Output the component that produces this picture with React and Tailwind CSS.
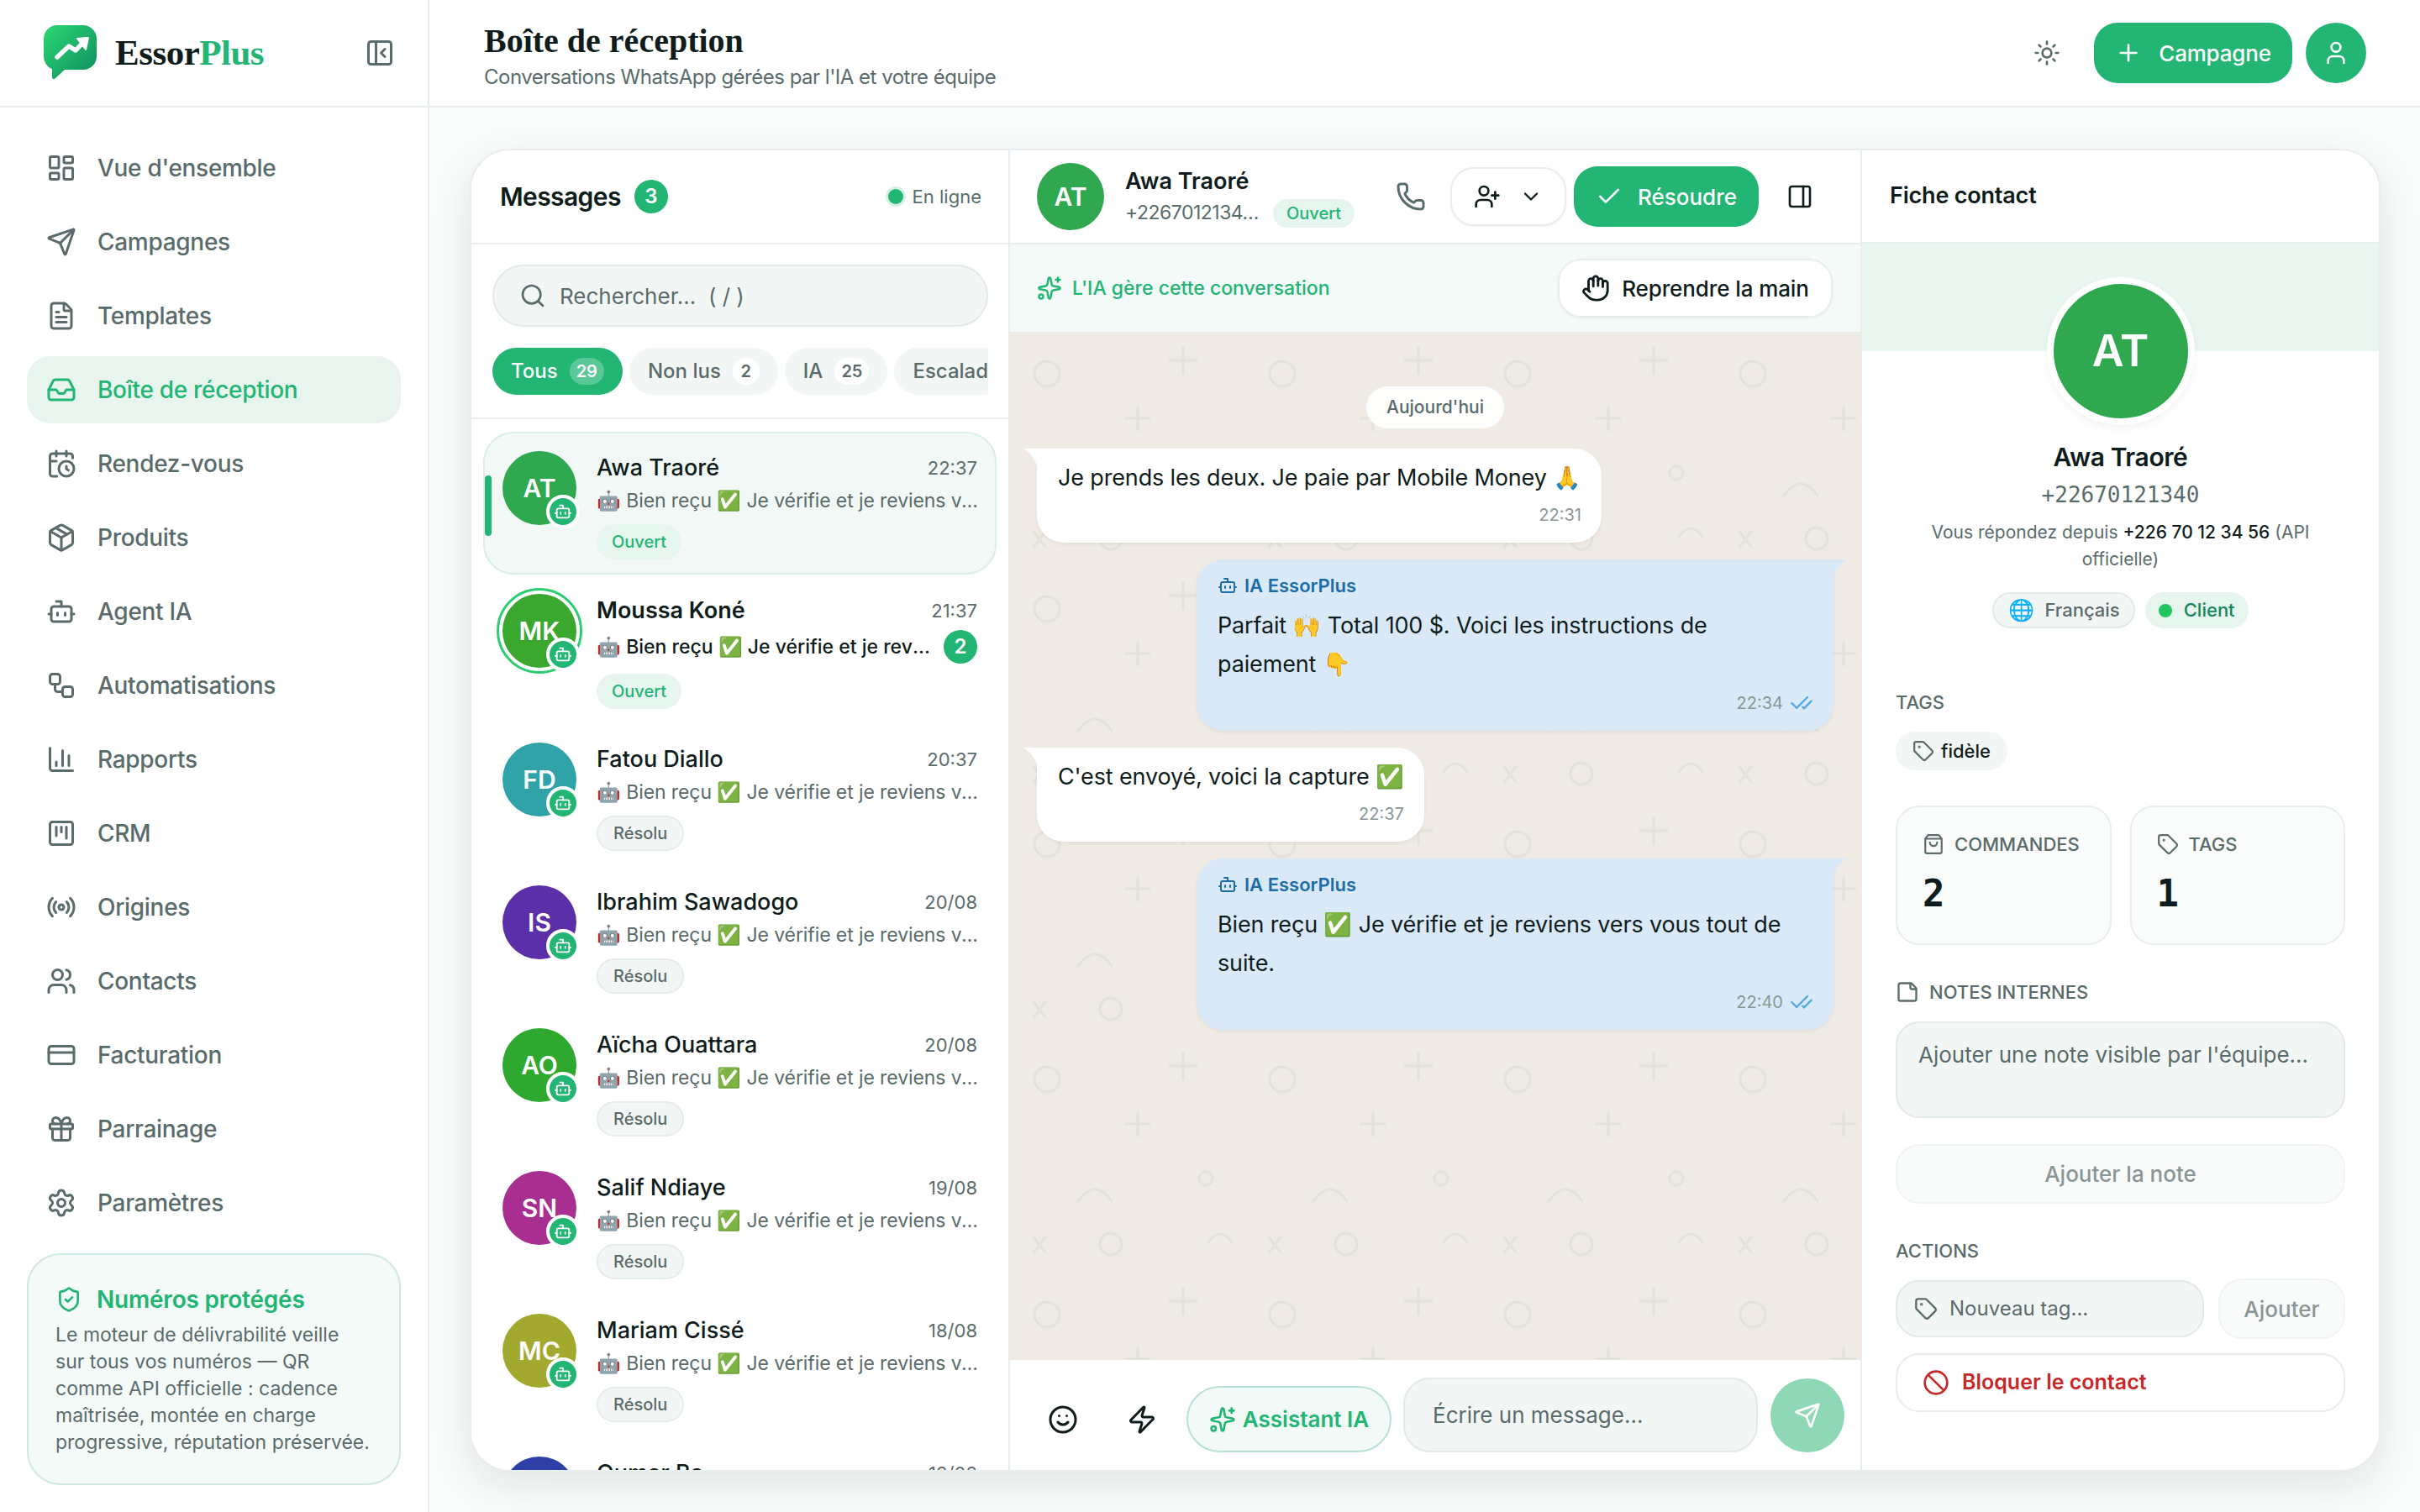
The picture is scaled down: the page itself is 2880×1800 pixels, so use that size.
import React from "react";
import {
  LayoutDashboard, Send, FileText, Inbox, CalendarClock, Package, Bot, Workflow, ChartColumn,
  SquareKanban, Radio, Users, CreditCard, Gift, Settings, ShieldCheck, PanelLeftClose, Sun, Plus,
  User, Search, Phone, UserPlus, ChevronDown, Check, PanelRight, Sparkles, Hand, CheckCheck,
  Smile, Zap, Tag, ShoppingBag, StickyNote, Ban,
} from "lucide-react";

const NAV = [
  { label: "Vue d'ensemble", icon: LayoutDashboard },
  { label: "Campagnes", icon: Send },
  { label: "Templates", icon: FileText },
  { label: "Boîte de réception", icon: Inbox, active: true },
  { label: "Rendez-vous", icon: CalendarClock },
  { label: "Produits", icon: Package },
  { label: "Agent IA", icon: Bot },
  { label: "Automatisations", icon: Workflow },
  { label: "Rapports", icon: ChartColumn },
  { label: "CRM", icon: SquareKanban },
  { label: "Origines", icon: Radio },
  { label: "Contacts", icon: Users },
  { label: "Facturation", icon: CreditCard },
  { label: "Parrainage", icon: Gift },
  { label: "Paramètres", icon: Settings },
];

const PREVIEW = "🤖 Bien reçu ✅ Je vérifie et je reviens vers vous tout de suite.";

const CONVERSATIONS = [
  { initials: "AT", name: "Awa Traoré", time: "22:37", color: "bg-[#2fa84f]", status: "Ouvert", selected: true },
  { initials: "MK", name: "Moussa Koné", time: "21:37", color: "bg-[#3aa72f]", status: "Ouvert", unread: 2 },
  { initials: "FD", name: "Fatou Diallo", time: "20:37", color: "bg-[#2fa3a8]", status: "Résolu" },
  { initials: "IS", name: "Ibrahim Sawadogo", time: "20/08", color: "bg-[#5b2fa8]", status: "Résolu" },
  { initials: "AO", name: "Aïcha Ouattara", time: "20/08", color: "bg-[#2fa82f]", status: "Résolu" },
  { initials: "SN", name: "Salif Ndiaye", time: "19/08", color: "bg-[#a82f8f]", status: "Résolu" },
  { initials: "MC", name: "Mariam Cissé", time: "18/08", color: "bg-[#a3a82f]", status: "Résolu" },
  { initials: "OB", name: "Oumar Ba", time: "18/08", color: "bg-[#2f3fa8]", status: "Résolu" },
];

function Logo() {
  return (
    <svg width="64" height="68" viewBox="0 0 64 68" className="shrink-0">
      <defs>
        <linearGradient id="logoGrad" x1="0" y1="0" x2="1" y2="1">
          <stop offset="0" stopColor="#2bd873" />
          <stop offset="1" stopColor="#0f8a5f" />
        </linearGradient>
      </defs>
      <path
        d="M16 1h31a16 16 0 0 1 16 16v21a16 16 0 0 1-16 16H25L13.5 64.5c-1.5 1.3-3.5.5-3.5-1.5V53.2A16 16 0 0 1 0 38V17A16 16 0 0 1 16 1z"
        fill="url(#logoGrad)"
      />
      <path d="M16 39 30 26l8 5 12-13" fill="none" stroke="#fff" strokeWidth="5.5" strokeLinecap="round" strokeLinejoin="round" />
      <path d="M53 16 40 17l10 13z" fill="#fff" stroke="#fff" strokeWidth="2" strokeLinejoin="round" />
    </svg>
  );
}

function Sidebar() {
  return (
    <aside className="w-[511px] shrink-0 h-full bg-white border-r-2 border-[#e8eeed] flex flex-col">
      <div className="h-[128px] shrink-0 border-b-2 border-[#e8eeed] flex items-center pl-[52px] pr-[39px]">
        <Logo />
        <span className="ml-[21px] text-[43px] font-bold tracking-[-0.5px] text-[#0f1c1c] font-['Liberation_Serif',serif]">
          Essor<span className="text-[#22b573]">Plus</span>
        </span>
        <PanelLeftClose size={36} className="ml-auto text-[#5a6b6b]" />
      </div>
      <nav className="px-[32px] pt-[32px] flex flex-col gap-[8px]">
        {NAV.map((item) => (
          <div
            key={item.label}
            className={`h-[80px] rounded-[28px] pl-[23px] flex items-center gap-[25px] text-[28px] tracking-[-0.3px] font-medium ${
              item.active ? "bg-[#e8f5ef] text-[#22b573]" : "text-[#5a6b6b]"
            }`}
          >
            <item.icon size={36} />
            <span>{item.label}</span>
          </div>
        ))}
      </nav>
      <div className="mx-[32px] mt-[20px] h-[276px] rounded-[40px] border-2 border-[#cfe9de] bg-[#f4faf8] px-[32px] pt-[33px]">
        <div className="flex items-center gap-[17px] h-[40px] text-[28px] font-semibold tracking-[-0.2px] text-[#22b573]">
          <ShieldCheck size={32} />
          <span>Numéros protégés</span>
        </div>
        <p className="mt-[6px] text-[23px] leading-[32px] text-[#5a6b6b]">
          Le moteur de délivrabilité veille sur tous vos numéros — QR comme API officielle : cadence maîtrisée, montée en
          charge progressive, réputation préservée.
        </p>
      </div>
    </aside>
  );
}

function TopBar() {
  return (
    <header className="h-[128px] shrink-0 bg-white border-b-2 border-[#e8eeed] flex items-center pl-[65px] pr-[64px]">
      <div className="pt-[9px]">
        <h1 className="text-[40px] leading-[46px] font-bold text-[#0f1c1c] font-['Liberation_Serif',serif]">
          Boîte de réception
        </h1>
        <p className="mt-[3px] text-[24px] leading-[34px] tracking-[-0.5px] text-[#5a6b6b]">
          Conversations WhatsApp gérées par l'IA et votre équipe
        </p>
      </div>
      <Sun size={32} className="ml-auto text-[#5a6b6b]" />
      <button className="ml-[40px] h-[72px] w-[236px] rounded-[28px] bg-[#22b573] text-white flex items-center justify-center gap-[20px] text-[26px] tracking-[-0.2px] font-medium">
        <Plus size={32} />
        Campagne
      </button>
      <button className="ml-[16px] w-[72px] h-[72px] rounded-full bg-[#22b573] text-white flex items-center justify-center">
        <User size={32} />
      </button>
    </header>
  );
}

function Chip({ label, count, active }) {
  return (
    <div
      className={`h-[56px] shrink-0 rounded-full flex items-center gap-[14px] text-[24px] font-medium px-[22px] ${
        active ? "bg-[#22b573] text-white" : "bg-[#f2f7f5] text-[#5a6b6b]"
      }`}
    >
      <span>{label}</span>
      {count != null && (
        <span
          className={`h-[32px] min-w-[32px] px-[8px] rounded-full flex items-center justify-center text-[20px] font-semibold ${
            active ? "bg-white/25 text-white" : "bg-white text-[#5a6b6b]"
          }`}
        >
          {count}
        </span>
      )}
    </div>
  );
}

function ConversationRow({ c }) {
  const open = c.status === "Ouvert";
  const bold = c.unread != null;
  return (
    <div
      className={`relative flex shrink-0 rounded-[36px] pl-[21px] pr-[21px] pt-[21px] border-2 ${
        bold ? "h-[177px]" : "h-[170px]"
      } ${c.selected ? "bg-[#f1f8f5] border-[#d9efe6]" : "border-transparent"}`}
    >
      {c.selected && <div className="absolute left-0 top-[50px] w-[8px] h-[72px] rounded-full bg-[#22b573]" />}
      <div className={`relative w-[88px] h-[88px] shrink-0 rounded-full ${c.color} flex items-center justify-center text-white text-[30px] font-semibold ${bold ? "outline-[3px] outline-offset-[4px] outline-[#2ecc71]" : ""}`}>
        {c.initials}
        <div className="absolute -right-[4px] -bottom-[4px] w-[40px] h-[40px] rounded-full bg-[#22b573] border-[4px] border-white flex items-center justify-center">
          <Bot size={22} className="text-white" />
        </div>
      </div>
      <div className="ml-[24px] flex-1 min-w-0">
        <div className="h-[40px] flex items-center justify-between">
          <span className={`text-[27px] truncate text-[#0f1c1c] ${bold ? "font-semibold" : "font-medium"}`}>{c.name}</span>
          <span className="text-[22px] text-[#5a6b6b]">{c.time}</span>
        </div>
        <div className={`flex items-center gap-[12px] ${bold ? "h-[46px]" : "h-[38px]"}`}>
          <span className={`flex-1 min-w-0 truncate text-[23px] ${bold ? "text-[#0f1c1c] font-medium" : "text-[#5a6b6b] tracking-[-0.1px] -mr-[8px]"}`}>
            {PREVIEW}
          </span>
          {bold && (
            <span className="w-[40px] h-[40px] shrink-0 rounded-full bg-[#22b573] text-white flex items-center justify-center text-[24px] font-semibold">
              {c.unread}
            </span>
          )}
        </div>
        <span
          className={`mt-[9px] inline-flex items-center h-[42px] px-[18px] rounded-full text-[20px] font-medium ${
            open ? "bg-[#e6f5ee] text-[#22b573]" : "bg-[#f2f7f5] border-2 border-[#e6ecea] text-[#5a6b6b]"
          }`}
        >
          {c.status}
        </span>
      </div>
    </div>
  );
}

function MessagesColumn() {
  return (
    <section className="w-[641px] shrink-0 h-full border-r-2 border-[#e8eeed] flex flex-col overflow-hidden">
      <div className="h-[112px] shrink-0 border-b-2 border-[#e8eeed] flex items-center pl-[34px] pr-[32px]">
        <span className="text-[30px] font-semibold tracking-[-0.6px] text-[#0f1c1c]">Messages</span>
        <span className="ml-[16px] w-[40px] h-[40px] rounded-full bg-[#22b573] text-white flex items-center justify-center text-[24px] font-semibold">
          3
        </span>
        <span className="ml-auto w-[18px] h-[18px] rounded-full bg-[#22b573] ring-[3px] ring-[#d3f0e3]" />
        <span className="ml-[11px] text-[22px] text-[#5a6b6b]">En ligne</span>
      </div>
      <div className="h-[208px] shrink-0 border-b-2 border-[#e8eeed] pl-[25px] pr-[24px] pt-[24px] overflow-hidden">
        <div className="h-[74px] rounded-full bg-[#f2f7f5] border-2 border-[#e3e9e8] flex items-center pl-[30px] gap-[16px] text-[26px] text-[#5a6b6b]">
          <Search size={32} />
          <span>Rechercher...&nbsp; ( / )</span>
        </div>
        <div className="mt-[25px] flex gap-[8px] overflow-hidden">
          <Chip label="Tous" count="29" active />
          <Chip label="Non lus" count="2" />
          <Chip label="IA" count="25" />
          <Chip label="Escaladés" count="1" />
        </div>
      </div>
      <div className="px-[14px] pt-[15px] flex flex-col">
        {CONVERSATIONS.map((c) => (
          <ConversationRow key={c.initials} c={c} />
        ))}
      </div>
    </section>
  );
}

function ChatPattern() {
  return (
    <svg className="absolute inset-0 w-full h-full" aria-hidden="true">
      <defs>
        <pattern id="chatDoodles" width="280" height="280" y="-2" patternUnits="userSpaceOnUse">
          <g fill="none" stroke="#e4e1d9" strokeWidth="3" strokeLinecap="round">
            <circle cx="44" cy="52" r="15" />
            <path d="M206 20v32M190 36h32" />
            <path d="M152 91v28M138 105h28" />
            <circle cx="233" cy="170" r="8" />
            <path d="M81 197q20-28 40 0" />
            <path d="M236 246q14-20 28 0" />
            <path d="M28 240l14 18M42 240l-14 18" />
            <circle cx="120" cy="248" r="13" />
          </g>
        </pattern>
      </defs>
      <rect width="100%" height="100%" fill="url(#chatDoodles)" />
    </svg>
  );
}

function Bubble({ side, time, label, children }) {
  const mine = side === "right";
  return (
    <div className={`relative ${mine ? "self-end w-[758px] bg-[#d9e9f8] rounded-[32px] rounded-tr-none pb-[19px]" : "self-start w-fit bg-white rounded-[32px] rounded-tl-none pb-[19px]"} pl-[25px] pr-[24px] pt-[16px] shadow-[0_2px_4px_rgba(0,0,0,0.05)]`}>
      <svg width="18" height="28" viewBox="0 0 18 28" className={`absolute top-0 ${mine ? "-right-[16px] -scale-x-100" : "-left-[16px]"}`}>
        <path d="M0 0h18v28Q14 8 0 0z" fill={mine ? "#d9e9f8" : "#fff"} />
      </svg>
      {label && (
        <div className="h-[30px] flex items-center gap-[8px] text-[22px] font-semibold text-[#1b6ca8]">
          <Bot size={24} />
          {label}
        </div>
      )}
      <p className={`text-[27px] tracking-[-0.15px] text-[#0f1c1c] ${mine ? "mt-[10px] leading-[46px] max-w-[690px]" : "leading-[38px]"}`}>{children}</p>
      <div className={`flex items-center justify-end gap-[8px] h-[28px] text-[20px] text-[#8a9696] ${mine ? "mt-[9px]" : "mt-[11px]"}`}>
        <span>{time}</span>
        {mine && <CheckCheck size={28} className="text-[#53a9e0]" />}
      </div>
    </div>
  );
}

function ChatColumn() {
  return (
    <section className="w-[1014px] shrink-0 h-full border-r-2 border-[#e8eeed] flex flex-col">
      <div className="h-[112px] shrink-0 border-b-2 border-[#e8eeed] flex items-center pl-[32px]">
        <div className="w-[80px] h-[80px] shrink-0 rounded-full bg-[#2fa84f] text-white flex items-center justify-center text-[30px] font-semibold">
          AT
        </div>
        <div className="ml-[25px] w-[276px]">
          <div className="text-[27px] leading-[38px] font-semibold text-[#0f1c1c]">Awa Traoré</div>
          <div className="flex items-center h-[37px] pt-[1px]">
            <span className="w-[165px] mr-[11px] whitespace-nowrap text-[23px] tracking-[-0.5px] text-[#5a6b6b]">+2267012134…</span>
            <span className="h-[34px] px-[16px] rounded-full bg-[#e6f5ee] text-[#22b573] text-[20px] font-medium flex items-center">
              Ouvert
            </span>
          </div>
        </div>
        <Phone size={36} className="ml-[46px] text-[#5a6b6b]" />
        <button className="ml-[29px] w-[138px] h-[70px] rounded-[28px] bg-white border-2 border-[#e8eeed] shadow-[0_1px_3px_rgba(0,0,0,0.06)] flex items-center justify-center gap-[22px] text-[#0f1c1c]">
          <UserPlus size={32} />
          <ChevronDown size={28} />
        </button>
        <button className="ml-[9px] w-[220px] h-[72px] rounded-[28px] bg-[#22b573] text-white flex items-center justify-center gap-[18px] text-[26px] font-medium">
          <Check size={32} />
          Résoudre
        </button>
        <PanelRight size={32} className="ml-[33px] text-[#0f1c1c]" />
      </div>
      <div className="h-[104px] shrink-0 bg-[#f3faf7] flex items-center pl-[32px] pr-[33px]">
        <Sparkles size={30} className="text-[#22b573]" />
        <span className="ml-[12px] text-[23px] font-medium text-[#22b573]">L'IA gère cette conversation</span>
        <button className="ml-auto w-[327px] h-[70px] rounded-[28px] bg-white border-2 border-[#e8eeed] shadow-[0_1px_3px_rgba(0,0,0,0.06)] flex items-center justify-center gap-[14px] text-[26px] font-medium tracking-[-0.1px] text-[#0f1c1c]">
          <Hand size={34} />
          Reprendre la main
        </button>
      </div>
      <div className="relative flex-1 min-h-0 bg-[#efebe4] overflow-hidden">
        <ChatPattern />
        <div className="relative px-[32px] pt-[65px] flex flex-col gap-[20px]">
          <div className="self-center h-[50px] w-[164px] mb-[4px] rounded-full bg-white/90 flex items-center justify-center text-[21px] font-medium text-[#5a6b6b]">
            Aujourd'hui
          </div>
          <Bubble side="left" time="22:31">Je prends les deux. Je paie par Mobile Money 🙏</Bubble>
          <Bubble side="right" time="22:34" label="IA EssorPlus">
            Parfait 🙌 Total 100 $. Voici les instructions de paiement 👇
          </Bubble>
          <Bubble side="left" time="22:37">C'est envoyé, voici la capture ✅</Bubble>
          <Bubble side="right" time="22:40" label="IA EssorPlus">
            Bien reçu ✅ Je vérifie et je reviens vers vous tout de suite.
          </Bubble>
        </div>
      </div>
      <div className="h-[131px] shrink-0 bg-white flex items-end pb-[21px]">
        <Smile size={36} className="ml-[45px] mb-[21px] shrink-0 text-[#0f1c1c]" />
        <Zap size={36} className="ml-[58px] mb-[21px] shrink-0 text-[#0f1c1c]" />
        <button className="ml-[35px] w-[244px] h-[79px] shrink-0 rounded-full border-2 border-[#b8e2d0] bg-[#f2faf7] flex items-center justify-center gap-[8px] text-[26px] font-semibold text-[#22b573]">
          <Sparkles size={32} />
          Assistant IA
        </button>
        <div className="ml-[14px] w-[422px] h-[89px] shrink-0 rounded-[32px] border-2 border-[#e3e9e8] bg-[#f2f7f5] pl-[33px] pt-[23px] text-[26px] text-[#5a6b6b]">
          Écrire un message...
        </div>
        <div className="ml-[15px] w-[88px] h-[88px] shrink-0 rounded-full bg-[#8ed8b5] flex items-center justify-center text-white">
          <Send size={32} />
        </div>
      </div>
    </section>
  );
}

function StatCard({ icon: Icon, label, value }) {
  return (
    <div className="flex-1 h-[166px] rounded-[28px] bg-[#fafcfb] border-2 border-[#e8eeed] pl-[30px] pt-[28px]">
      <div className="flex items-center gap-[12px] h-[32px] text-[22px] font-medium uppercase text-[#5a6b6b]">
        <Icon size={26} />
        {label}
      </div>
      <div className="mt-[16px] text-[44px] leading-[54px] font-bold text-[#0f1c1c] font-['DejaVu_Sans_Mono',monospace]">{value}</div>
    </div>
  );
}

function ContactColumn() {
  return (
    <section className="flex-1 min-w-0 h-full flex flex-col">
      <div className="h-[111px] shrink-0 border-b-2 border-[#e8eeed] flex items-center pl-[33px] text-[27px] tracking-[-0.2px] font-semibold text-[#0f1c1c]">
        Fiche contact
      </div>
      <div className="h-[128px] shrink-0 bg-[#e9f7f0]" />
      <div className="-mt-[88px] px-[40px] flex flex-col">
        <div className="self-center w-[176px] h-[176px] rounded-full bg-[#2fa84f] border-[8px] border-white shadow-[0_4px_10px_rgba(0,0,0,0.05)] flex items-center justify-center text-white text-[52px] font-semibold">
          AT
        </div>
        <div className="mt-[16px] text-center text-[30px] leading-[44px] font-semibold tracking-[-0.4px] text-[#0f1c1c]">Awa Traoré</div>
        <div className="mt-[5px] text-center text-[26px] leading-[36px] text-[#5a6b6b] font-['DejaVu_Sans_Mono',monospace]">+22670121340</div>
        <p className="mt-[11px] px-[20px] text-center text-[21px] leading-[32px] text-[#5a6b6b]">
          Vous répondez depuis <span className="font-medium text-[#0f1c1c]">+226 70 12 34 56</span> (API officielle)
        </p>
        <div className="mt-[23px] flex justify-center gap-[12px]">
          <span className="h-[43px] pl-[17px] pr-[16px] rounded-full bg-[#f2f7f5] border-2 border-[#e3e9e8] flex items-center gap-[12px] text-[22px] font-medium text-[#5a6b6b]">
            <span className="text-[25px]">🌐</span>
            Français
          </span>
          <span className="h-[43px] pl-[16px] pr-[16px] rounded-full bg-[#e6f5ee] flex items-center gap-[14px] text-[22px] font-medium text-[#15855a]">
            <span className="w-[16px] h-[16px] rounded-full bg-[#22c55e]" />
            Client
          </span>
        </div>
        <div className="mt-[72px] h-[32px] flex items-center text-[22px] font-medium text-[#5a6b6b]">TAGS</div>
        <span className="mt-[19px] self-start h-[46px] pl-[20px] pr-[20px] rounded-full bg-[#f2f7f5] flex items-center gap-[8px] text-[22px] font-medium text-[#0f1c1c]">
          <Tag size={26} className="text-[#5a6b6b]" />
          fidèle
        </span>
        <div className="mt-[42px] flex gap-[22px]">
          <StatCard icon={ShoppingBag} label="Commandes" value="2" />
          <StatCard icon={Tag} label="Tags" value="1" />
        </div>
        <div className="mt-[40px] h-[32px] flex items-center gap-[12px] text-[22px] font-medium text-[#5a6b6b]">
          <StickyNote size={28} />
          NOTES INTERNES
        </div>
        <div className="mt-[19px] h-[115px] rounded-[28px] bg-[#f2f7f5] border-2 border-[#e3e9e8] pl-[25px] pt-[18px] text-[26px] text-[#5a6b6b]">
          Ajouter une note visible par l'équipe...
        </div>
        <div className="mt-[31px] h-[71px] rounded-[28px] bg-[#f9fbfa] border-2 border-[#f0f4f3] flex items-center justify-center text-[26px] font-medium text-[#8a9696]">
          Ajouter la note
        </div>
        <div className="mt-[40px] h-[32px] flex items-center text-[22px] font-medium text-[#5a6b6b]">ACTIONS</div>
        <div className="mt-[17px] flex items-center gap-[17px]">
          <div className="w-[367px] h-[68px] rounded-[28px] bg-[#f2f7f5] border-2 border-[#e3e9e8] pl-[20px] flex items-center gap-[14px] text-[24px] text-[#5a6b6b]">
            <Tag size={28} />
            Nouveau tag...
          </div>
          <div className="flex-1 h-[72px] rounded-[28px] bg-[#f9fbfa] border-2 border-[#f0f4f3] flex items-center justify-center text-[26px] font-medium text-[#8a9696]">
            Ajouter
          </div>
        </div>
        <div className="mt-[17px] h-[70px] rounded-[28px] bg-white border-2 border-[#e8eeed] flex items-center pl-[30px] gap-[15px] text-[25px] font-semibold text-[#c62828]">
          <Ban size={32} />
          Bloquer le contact
        </div>
      </div>
    </section>
  );
}

export default function App() {
  return (
    <div className="w-[2880px] h-[1800px] flex bg-[#fafbfb] font-[Inter,sans-serif] overflow-hidden">
      <Sidebar />
      <div className="flex-1 min-w-0 h-full flex flex-col">
        <TopBar />
        <main className="flex-1 min-h-0 pl-[48px] pr-[47px] pt-[49px] pb-[48px]">
          <div className="h-full flex rounded-[48px] bg-white border-2 border-[#e8eeed] shadow-[0_16px_48px_rgba(15,28,28,0.1)] overflow-hidden">
            <MessagesColumn />
            <ChatColumn />
            <ContactColumn />
          </div>
        </main>
      </div>
    </div>
  );
}
